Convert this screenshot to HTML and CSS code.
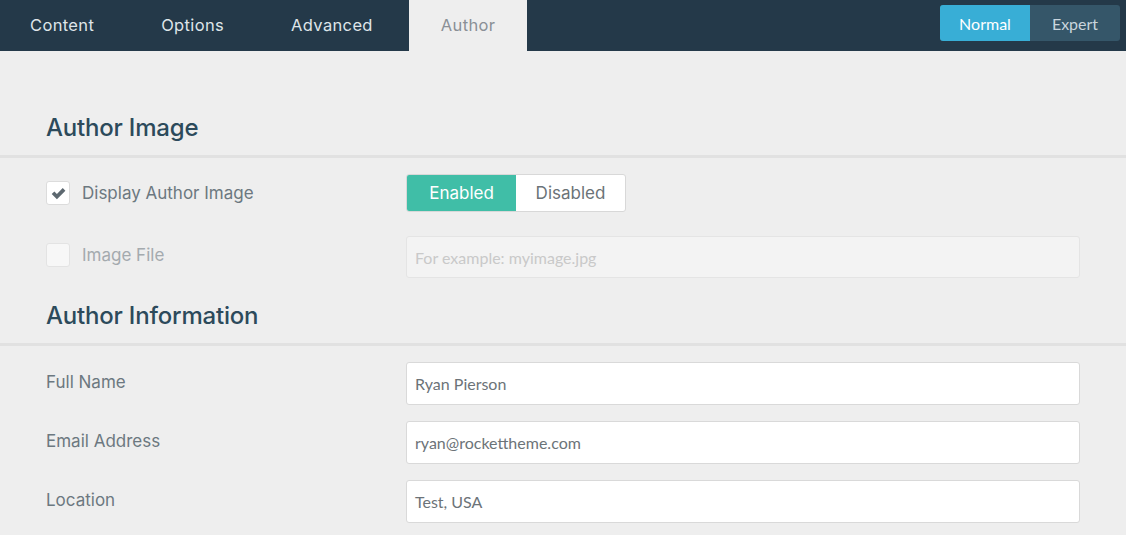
FILE: index.html
```html
<!DOCTYPE html>
<html>
<head>
<meta charset="utf-8">
<link rel="stylesheet" href="styles.css">
</head>
<body>
<header class="topbar">
  <nav class="tabs">
    <a class="tab">Content</a>
    <a class="tab">Options</a>
    <a class="tab">Advanced</a>
    <a class="tab active">Author</a>
  </nav>
  <div class="mode">
    <span class="mode-btn on">Normal</span>
    <span class="mode-btn">Expert</span>
  </div>
</header>
<main class="panel">
  <h2 class="section-title first">Author Image</h2>
  <div class="row row-check row-first">
    <div class="label-cell">
      <span class="checkbox checked">
        <svg viewBox="0 0 16 16" width="17" height="17"><path d="M1.6 8.4 L4.1 6 L6.5 8.4 L12 2.9 L14.5 5.3 L6.5 13.3 Z" fill="#5d6870"/></svg>
      </span>
      <span class="label">Display Author Image</span>
    </div>
    <div class="field-cell">
      <div class="toggle">
        <span class="toggle-btn on">Enabled</span>
        <span class="toggle-btn">Disabled</span>
      </div>
    </div>
  </div>
  <div class="row row-check row-disabled">
    <div class="label-cell">
      <span class="checkbox"></span>
      <span class="label">Image File</span>
    </div>
    <div class="field-cell">
      <div class="input disabled"><span class="placeholder">For example: myimage.jpg</span></div>
    </div>
  </div>
  <h2 class="section-title second">Author Information</h2>
  <div class="row row-text">
    <div class="label-cell"><span class="label">Full Name</span></div>
    <div class="field-cell"><div class="input">Ryan Pierson</div></div>
  </div>
  <div class="row row-text">
    <div class="label-cell"><span class="label">Email Address</span></div>
    <div class="field-cell"><div class="input">ryan@rockettheme.com</div></div>
  </div>
  <div class="row row-text">
    <div class="label-cell"><span class="label">Location</span></div>
    <div class="field-cell"><div class="input">Test, USA</div></div>
  </div>
</main>
</body>
</html>
```
FILE: styles.css
```css
* { box-sizing: border-box; }
html, body { margin: 0; padding: 0; }
body {
  background: #eeeeee;
  font-family: Inter, "Noto Sans", sans-serif;
  width: 1126px;
  height: 535px;
  overflow: hidden;
}
.topbar {
  height: 51px;
  background: #243949;
  display: flex;
  justify-content: space-between;
  align-items: flex-start;
}
.tabs { display: flex; gap: 5px; height: 51px; }
.tab {
  display: flex;
  align-items: center;
  padding: 0 31px 2px;
  height: 51px;
  color: #dfe5e9;
  font-size: 16.5px;
  letter-spacing: 0.35px;
}
.tab:first-child { padding-left: 30px; }
.tab.active { background: #eeeeee; color: #8a9096; padding: 0 32px 2px; }
.mode {
  display: flex;
  margin: 5px 6px 0 0;
  border-radius: 3px;
  overflow: hidden;
  background: #355669;
}
.mode-btn {
  width: 90px;
  height: 36px;
  display: flex;
  align-items: center;
  justify-content: center;
  font-family: Lato, sans-serif;
  font-size: 16px;
  color: #c9d5dd;
}
.mode-btn.on { background: #38aed6; color: #ffffff; }
.panel { padding: 0 46px; }
.section-title {
  margin: 22px -46px 0;
  padding: 0 46px 12px;
  line-height: 30px;
  font-size: 24px;
  font-weight: 500;
  color: #2c4a5b;
  letter-spacing: -0.2px;
  border-bottom: 3px solid #e1e1e1;
}
.section-title.first { margin-top: 62px; }
.section-title.second { margin-top: 23px; }
.row {
  display: flex;
  align-items: center;
}
.row-first { margin-top: 16px; }
.row-disabled { margin-top: 24px; }
.row-text { margin-top: 15px; }
.section-title + .row-text { margin-top: 16px; }
.label-cell {
  width: 360px;
  display: flex;
  align-items: center;
  gap: 12px;
}
.label {
  font-size: 17px;
  color: #6c7880;
}
.row-text .label { margin-top: -4px; }
.row-disabled .label { color: #a4aaae; margin-top: -4px; }
.checkbox {
  width: 24px;
  height: 24px;
  border: 1px solid #dcdcdc;
  border-radius: 3px;
  background: #ffffff;
  display: flex;
  align-items: center;
  justify-content: center;
}
.row-disabled .checkbox { background: #f7f7f7; border-color: #e3e3e3; margin-top: -4px; }
.field-cell { flex: 1; }
.toggle {
  display: inline-flex;
  border: 1px solid #d8d8d8;
  border-radius: 3px;
  overflow: hidden;
  background: #fff;
}
.toggle-btn {
  width: 109px;
  height: 36px;
  display: flex;
  align-items: center;
  justify-content: center;
  font-size: 17px;
  color: #6b7378;
}
.toggle-btn.on { background: #40bea7; color: #ffffff; }
.input {
  height: 43px;
  border: 1px solid #d9d9d9;
  border-radius: 3px;
  background: #ffffff;
  display: flex;
  align-items: center;
  padding: 0 8px;
  font-family: Lato, sans-serif;
  font-size: 16px;
  color: #6c7378;
}
.row-text + .row-text { margin-top: 16px; }
.input.disabled { height: 42px; background: #f3f3f3; border-color: #e4e4e4; }
.placeholder { color: #c9c9c9; }
```
